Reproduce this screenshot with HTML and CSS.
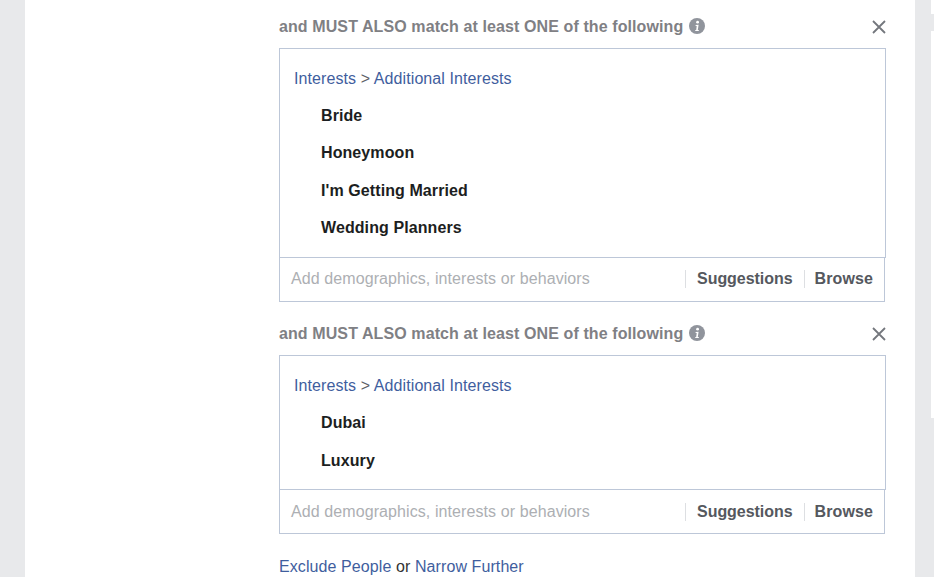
FILE: index.html
```html
<!DOCTYPE html>
<html lang="en">
<head>
    <meta charset="UTF-8">
    <meta name="viewport" content="width=device-width, initial-scale=1.0">
    <title>Detailed Targeting</title>
    <link rel="stylesheet" href="styles.css">
</head>
<body>
    <div class="page">
        <div class="content">
            <section class="group">
                <div class="group-head">
                    <span class="group-title">and MUST ALSO match at least ONE of the following</span>
                    <svg class="info-icon" viewBox="0 0 16 16"><circle cx="8" cy="8" r="8" fill="#90949c"/><circle cx="8.6" cy="4.2" r="1.4" fill="#fff"/><path d="M6.4 7.1l3.2-.3-.8 5.2h1v1.1H6.2l.1-1.1h.9l.5-3.9h-.9z" fill="#fff"/></svg>
                    <svg class="close-icon" viewBox="0 0 14 14"><path d="M1 1l12 12M13 1L1 13" stroke="#74777d" stroke-width="1.8" fill="none"/></svg>
                </div>
                <div class="selected">
                    <div class="crumb"><a href="#">Interests</a> <span class="sep">&gt;</span> <a href="#">Additional Interests</a></div>
                    <ul class="items">
                        <li>Bride</li>
                        <li>Honeymoon</li>
                        <li>I'm Getting Married</li>
                        <li>Wedding Planners</li>
                    </ul>
                </div>
                <div class="add-row">
                    <span class="placeholder">Add demographics, interests or behaviors</span>
                    <span class="add-link">Suggestions</span>
                    <span class="add-link">Browse</span>
                </div>
            </section>

            <section class="group">
                <div class="group-head">
                    <span class="group-title">and MUST ALSO match at least ONE of the following</span>
                    <svg class="info-icon" viewBox="0 0 16 16"><circle cx="8" cy="8" r="8" fill="#90949c"/><circle cx="8.6" cy="4.2" r="1.4" fill="#fff"/><path d="M6.4 7.1l3.2-.3-.8 5.2h1v1.1H6.2l.1-1.1h.9l.5-3.9h-.9z" fill="#fff"/></svg>
                    <svg class="close-icon" viewBox="0 0 14 14"><path d="M1 1l12 12M13 1L1 13" stroke="#74777d" stroke-width="1.8" fill="none"/></svg>
                </div>
                <div class="selected">
                    <div class="crumb"><a href="#">Interests</a> <span class="sep">&gt;</span> <a href="#">Additional Interests</a></div>
                    <ul class="items">
                        <li>Dubai</li>
                        <li>Luxury</li>
                    </ul>
                </div>
                <div class="add-row">
                    <span class="placeholder">Add demographics, interests or behaviors</span>
                    <span class="add-link">Suggestions</span>
                    <span class="add-link">Browse</span>
                </div>
            </section>

            <p class="more"><a href="#">Exclude People</a> or <a href="#">Narrow Further</a></p>
        </div>
    </div>
    <div class="scroll-edge scroll-edge-top"></div>
    <div class="scroll-edge scroll-edge-main"></div>
</body>
</html>
```

FILE: styles.css
```css
html, body {
    margin: 0;
    padding: 0;
    height: 577px;
    overflow: hidden;
}

body {
    font-family: "Liberation Sans", Arial, sans-serif;
    font-size: 16px;
    letter-spacing: 0.09px;
    background-color: #e8e9eb;
    color: #1d2129;
}

a {
    color: #3f5e9e;
    text-decoration: none;
}

.page {
    margin: 0 19px 0 25px;
    height: 577px;
    background-color: #fff;
}

.content {
    padding: 15px 0 0 254px;
    width: 607px;
}

.group {
    margin-bottom: 20.7px;
}

.group-head {
    display: flex;
    align-items: center;
    height: 23px;
    margin-bottom: 10px;
}

.group-title {
    font-weight: bold;
    letter-spacing: 0.1px;
    color: #7f8084;
}

.info-icon {
    width: 16px;
    height: 16px;
    margin: -2px 0 0 6px;
}

.close-icon {
    width: 14px;
    height: 14px;
    margin: 1px 0 0 auto;
}

.selected {
    border: 1px solid #bdc7d8;
    padding: 20px 14px 0;
}

.crumb {
    height: 20px;
    line-height: 20px;
}

.sep {
    color: #5d6066;
}

.items {
    list-style: none;
    margin: 0;
    padding: 8px 0 10px 27px;
}

.items li {
    font-weight: bold;
    height: 37.4px;
    line-height: 37.4px;
    color: #1c1e21;
}

.add-row {
    display: flex;
    align-items: center;
    height: 43px;
    margin: -1px 1px 0 0;
    padding-right: 11px;
    border: 1px solid #bdc7d8;
    background-color: #fff;
}

.placeholder {
    flex: 1;
    padding-left: 11px;
    color: #adafb3;
}

.add-link {
    font-weight: bold;
    letter-spacing: -0.04px;
    color: #55585e;
    padding-left: 11px;
    margin-left: 11px;
    border-left: 1px solid #dddfe2;
    line-height: 18px;
}

.add-link + .add-link {
    letter-spacing: 0.1px;
    padding-left: 10px;
}

.more {
    margin: 0;
    padding-top: 3px;
    color: #333;
}

.scroll-edge {
    position: absolute;
    right: 0;
    width: 3px;
    background-color: #fff;
}

.scroll-edge-top {
    top: 0;
    height: 14px;
}

.scroll-edge-main {
    top: 31px;
    height: 387px;
}
```
